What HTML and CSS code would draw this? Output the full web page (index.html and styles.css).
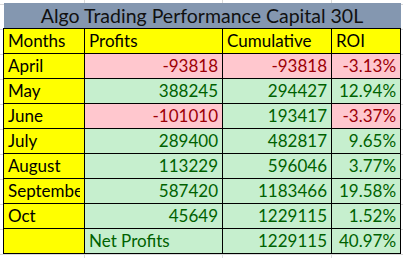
FILE: index.html
```html
<!DOCTYPE html>
<html>
<head>
<meta charset="utf-8">
<link rel="stylesheet" href="styles.css">
</head>
<body>
<table class="sheet">
  <colgroup>
    <col class="c-month"><col class="c-profit"><col class="c-cum"><col class="c-roi">
  </colgroup>
  <tr class="title-row"><td colspan="4" class="title">Algo Trading Performance Capital 30L</td></tr>
  <tr class="head">
    <td>Months</td><td>Profits</td><td>Cumulative</td><td>ROI</td>
  </tr>
  <tr>
    <td class="m">April</td><td class="num bad">-93818</td><td class="num bad">-93818</td><td class="num bad">-3.13%</td>
  </tr>
  <tr>
    <td class="m">May</td><td class="num good">388245</td><td class="num good">294427</td><td class="num good">12.94%</td>
  </tr>
  <tr>
    <td class="m">June</td><td class="num bad">-101010</td><td class="num good">193417</td><td class="num bad">-3.37%</td>
  </tr>
  <tr>
    <td class="m">July</td><td class="num good">289400</td><td class="num good">482817</td><td class="num good">9.65%</td>
  </tr>
  <tr>
    <td class="m">August</td><td class="num good">113229</td><td class="num good">596046</td><td class="num good">3.77%</td>
  </tr>
  <tr>
    <td class="m"><span class="clip">September</span></td><td class="num good">587420</td><td class="num good">1183466</td><td class="num good">19.58%</td>
  </tr>
  <tr>
    <td class="m">Oct</td><td class="num good">45649</td><td class="num good">1229115</td><td class="num good">1.52%</td>
  </tr>
  <tr>
    <td class="m"></td><td class="good">Net Profits</td><td class="num good">1229115</td><td class="num good">40.97%</td>
  </tr>
</table>
</body>
</html>
```
FILE: styles.css
```css
html, body {
  margin: 0;
  padding: 0;
}
body {
  width: 403px;
  height: 258px;
  overflow: hidden;
  padding: 3px 0 0 3px;
  box-sizing: border-box;
  background-color: #ffffff;
  background-image:
    linear-gradient(#dadada, #dadada),
    linear-gradient(#dadada, #dadada),
    linear-gradient(#dadada, #dadada),
    repeating-linear-gradient(to bottom, #dadada 0 1px, transparent 1px 25px);
  background-size: 1px 100%, 1px 100%, 1px 100%, 100% 100%;
  background-position: 84px 0, 222px 0, 331px 0, 0 4px;
  background-repeat: no-repeat, no-repeat, no-repeat, repeat;
  font-family: Lato, "Open Sans", sans-serif;
  font-size: 17px;
}
.sheet {
  border-collapse: collapse;
  table-layout: fixed;
  width: 397px;
}
.c-month { width: 81px; }
.c-profit { width: 138px; }
.c-cum { width: 109px; }
.c-roi { width: 69px; }

.sheet td {
  height: 24px;
  padding: 0 4px;
  border: 1px solid #000;
  white-space: nowrap;
  overflow: hidden;
  line-height: 24px;
}
.title-row td.title {
  height: 25px;
  background: #8497b0;
  border: none;
  text-align: center;
  color: #111;
  font-size: 19.5px;
  padding: 0;
}
.head td {
  background: #ffff00;
  color: #000;
}
.m {
  background: #ffff00;
  color: #000;
}
.num { text-align: right; }
.good {
  background: #c6efce;
  color: #006100;
}
.bad {
  background: #ffc7ce;
  color: #9c0006;
}
.clip { display: block; overflow: hidden; }
```
